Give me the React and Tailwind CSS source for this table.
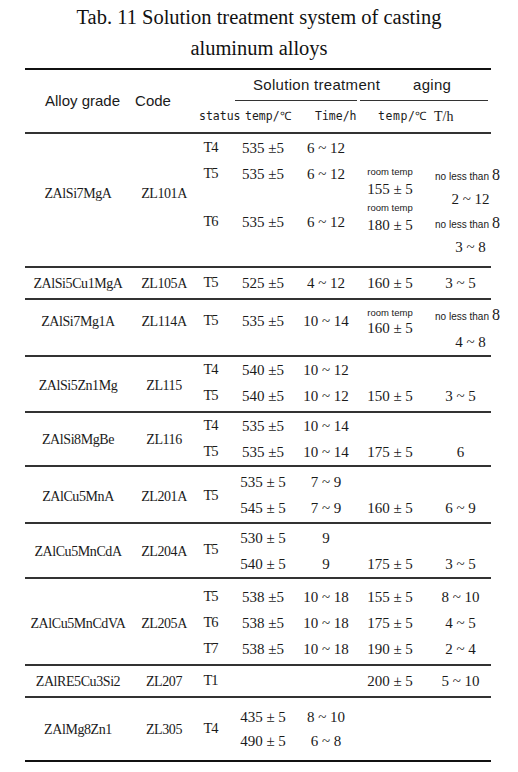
import React from "react";

const serif = "font-['Liberation_Serif','Times_New_Roman',serif]";
const sans = "font-['Liberation_Sans',Arial,sans-serif]";
const mono = "font-['DejaVu_Sans_Mono',monospace]";

function RoomTemp() {
  return <span className={`${sans} text-[9.5px] leading-none`}>room temp</span>;
}

function NoLess() {
  return (
    <span className="flex items-baseline gap-[3px]">
      <span className={`${sans} text-[10px] leading-none`}>no less than</span>
      <span className="text-[16px] leading-none">8</span>
    </span>
  );
}

// one column of a group: pt is the padding above, h the height of each line
function Col({ w, pt = "", h = "h-[26px]", items, cls = "" }) {
  return (
    <div className={`flex shrink-0 flex-col ${w} ${pt}`}>
      {items.map((it, i) => {
        const o =
          it && typeof it === "object" && !React.isValidElement(it) ? it : { t: it };
        return (
          <div
            key={i}
            className={`flex shrink-0 items-center justify-center whitespace-nowrap ${o.h || h} ${o.c || ""} ${cls}`}
          >
            {o.t}
          </div>
        );
      })}
    </div>
  );
}

function Group({ h, last, name, code, status, temp, time, aging, th }) {
  return (
    <div
      className={`flex ${h} ${
        last ? "border-b-2 border-[#111]" : "border-b-2 border-[#333]"
      }`}
    >
      <Col w="w-[106px]" items={[name]} cls="text-[14px] tracking-[-0.03em]" />
      <Col w="w-[66px]" items={[code]} cls="text-[14px] tracking-[-0.03em]" />
      <Col w="w-[27px]" {...status} cls="text-[14.5px] tracking-[-0.08em]" />
      <Col w="w-[78px]" {...temp} />
      <Col w="w-[48px]" {...time} />
      <Col w="w-[80px]" {...aging} />
      <Col w="w-[61px]" {...th} />
    </div>
  );
}

export default function App() {
  return (
    <div className={`h-[772px] w-[518px] overflow-hidden bg-white text-[#1a1a1a] ${serif}`}>
      <div className="pt-[2px] text-center text-[20.5px] leading-[31px] text-[#111]">
        <div>Tab. 11 Solution treatment system of casting</div>
        <div>aluminum alloys</div>
      </div>

      <div className="ml-[25px] mt-[4px] w-[466px] text-[15px]">
        {/* header */}
        <div className="flex h-[66px] border-y-2 border-t-[#111] border-b-[#333]">
          <div className={`flex w-[174px] items-center ${sans} text-[15px]`}>
            <span className="ml-[20px]">Alloy grade</span>
            <span className="ml-[15px]">Code</span>
          </div>
          <div className="flex flex-col">
            <div className={`flex h-[31px] ${sans} text-[15px] tracking-[0.02em]`}>
              <div className="ml-[36px] flex w-[122px] items-end border-b border-[#333] pb-[4px] pl-[18px] whitespace-nowrap">
                Solution treatment
              </div>
              <div className="ml-[3px] flex w-[128px] items-end border-b border-[#333] pb-[4px] pl-[53px]">
                aging
              </div>
            </div>
            <div className={`flex h-[31px] items-center ${mono} text-[11.5px]`}>
              <span className="w-[46px]">status</span>
              <span className="w-[70px]">temp/℃</span>
              <span className="w-[63px]">Time/h</span>
              <span className="w-[56px] tracking-[0.05em]">temp/℃</span>
              <span className={`${serif} text-[14px]`}>T/h</span>
            </div>
          </div>
        </div>

        <Group
          h="h-[134px]"
          name={{ t: "ZAlSi7MgA", h: "h-[118px]" }}
          code={{ t: "ZL101A", h: "h-[118px]" }}
          status={{ items: [{ t: "T4", h: "h-[28px]" }, { t: "T5", h: "h-[24px]" }, { t: "", h: "h-[24px]" }, { t: "T6", h: "h-[24px]" }] }}
          temp={{ items: [{ t: "535 ±5", h: "h-[28px]" }, { t: "535 ±5", h: "h-[24px]" }, { t: "", h: "h-[24px]" }, { t: "535 ±5", h: "h-[24px]" }] }}
          time={{ items: [{ t: "6 ~ 12", h: "h-[28px]" }, { t: "6 ~ 12", h: "h-[24px]" }, { t: "", h: "h-[24px]" }, { t: "6 ~ 12", h: "h-[24px]" }] }}
          aging={{
            items: [
              { t: "", h: "h-[32px]" },
              { t: <RoomTemp />, h: "h-[12px]" },
              { t: "155 ± 5", h: "h-[22px]" },
              { t: <RoomTemp />, h: "h-[16px]" },
              { t: "180 ± 5", h: "h-[18px]" },
            ],
          }}
          th={{
            items: [
              { t: "", h: "h-[29px]" },
              { t: <NoLess />, h: "h-[24px]", c: "pl-[14px]" },
              { t: "2 ~ 12", h: "h-[24px]", c: "pl-[20px]" },
              { t: <NoLess />, h: "h-[24px]", c: "pl-[14px]" },
              { t: "3 ~ 8", h: "h-[24px]", c: "pl-[20px]" },
            ],
          }}
        />

        <Group
          h="h-[32px]"
          name={{ t: "ZAlSi5Cu1MgA", h: "h-[30px]" }}
          code={{ t: "ZL105A", h: "h-[30px]" }}
          status={{ h: "h-[30px]", items: ["T5"] }}
          temp={{ h: "h-[30px]", items: ["525 ±5"] }}
          time={{ h: "h-[30px]", items: ["4 ~ 12"] }}
          aging={{ h: "h-[30px]", items: ["160 ± 5"] }}
          th={{ h: "h-[30px]", items: ["3 ~ 5"] }}
        />

        <Group
          h="h-[57px]"
          name={{ t: "ZAlSi7Mg1A", h: "h-[42px]" }}
          code={{ t: "ZL114A", h: "h-[42px]" }}
          status={{ h: "h-[42px]", items: ["T5"] }}
          temp={{ h: "h-[42px]", items: ["535 ±5"] }}
          time={{ h: "h-[42px]", items: ["10 ~ 14"] }}
          aging={{
            items: [
              { t: "", h: "h-[6px]" },
              { t: <RoomTemp />, h: "h-[14px]" },
              { t: "160 ± 5", h: "h-[16px]" },
            ],
          }}
          th={{
            items: [
              { t: <NoLess />, h: "h-[30px]", c: "pl-[14px]" },
              { t: "4 ~ 8", h: "h-[24px]", c: "pl-[20px]" },
            ],
          }}
        />

        <Group
          h="h-[56px]"
          name={{ t: "ZAlSi5Zn1Mg", h: "h-[56px]" }}
          code={{ t: "ZL115", h: "h-[56px]" }}
          status={{ items: ["T4", "T5"] }}
          temp={{ items: ["540 ±5", "540 ±5"] }}
          time={{ items: ["10 ~ 12", "10 ~ 12"] }}
          aging={{ items: ["", "150 ± 5"] }}
          th={{ items: ["", "3 ~ 5"] }}
        />

        <Group
          h="h-[54px]"
          name={{ t: "ZAlSi8MgBe", h: "h-[52px]" }}
          code={{ t: "ZL116", h: "h-[52px]" }}
          status={{ items: ["T4", "T5"] }}
          temp={{ items: ["535 ±5", "535 ±5"] }}
          time={{ items: ["10 ~ 14", "10 ~ 14"] }}
          aging={{ items: ["", "175 ± 5"] }}
          th={{ items: ["", "6"] }}
        />

        <Group
          h="h-[57px]"
          name={{ t: "ZAlCu5MnA", h: "h-[58px]" }}
          code={{ t: "ZL201A", h: "h-[58px]" }}
          status={{ h: "h-[58px]", items: ["T5"] }}
          temp={{ pt: "pt-[2px]", items: ["535 ± 5", "545 ± 5"] }}
          time={{ pt: "pt-[2px]", items: ["7 ~ 9", "7 ~ 9"] }}
          aging={{ pt: "pt-[2px]", items: ["", "160 ± 5"] }}
          th={{ pt: "pt-[2px]", items: ["", "6 ~ 9"] }}
        />

        <Group
          h="h-[55px]"
          name={{ t: "ZAlCu5MnCdA", h: "h-[54px]" }}
          code={{ t: "ZL204A", h: "h-[54px]" }}
          status={{ h: "h-[52px]", items: ["T5"] }}
          temp={{ pt: "pt-[1px]", items: ["530 ± 5", "540 ± 5"] }}
          time={{ pt: "pt-[1px]", items: ["9", "9"] }}
          aging={{ pt: "pt-[1px]", items: ["", "175 ± 5"] }}
          th={{ pt: "pt-[1px]", items: ["", "3 ~ 5"] }}
        />

        <Group
          h="h-[87px]"
          name={{ t: "ZAlCu5MnCdVA", h: "h-[88px]" }}
          code={{ t: "ZL205A", h: "h-[88px]" }}
          status={{ pt: "pt-[5px]", items: ["T5", "T6", "T7"] }}
          temp={{ pt: "pt-[5px]", items: ["538 ±5", "538 ±5", "538 ±5"] }}
          time={{ pt: "pt-[5px]", items: ["10 ~ 18", "10 ~ 18", "10 ~ 18"] }}
          aging={{ pt: "pt-[5px]", items: ["155 ± 5", "175 ± 5", "190 ± 5"] }}
          th={{ pt: "pt-[5px]", items: ["8 ~ 10", "4 ~ 5", "2 ~ 4"] }}
        />

        <Group
          h="h-[32px]"
          name={{ t: "ZAlRE5Cu3Si2", h: "h-[30px]" }}
          code={{ t: "ZL207", h: "h-[30px]" }}
          status={{ h: "h-[30px]", items: ["T1"] }}
          temp={{ h: "h-[30px]", items: [""] }}
          time={{ h: "h-[30px]", items: [""] }}
          aging={{ h: "h-[30px]", items: ["200 ± 5"] }}
          th={{ h: "h-[30px]", items: ["5 ~ 10"] }}
        />

        <Group
          h="h-[64px]"
          last
          name={{ t: "ZAlMg8Zn1", h: "h-[62px]" }}
          code={{ t: "ZL305", h: "h-[62px]" }}
          status={{ h: "h-[62px]", items: ["T4"] }}
          temp={{ pt: "pt-[7px]", h: "h-[24px]", items: ["435 ± 5", "490 ± 5"] }}
          time={{ pt: "pt-[7px]", h: "h-[24px]", items: ["8 ~ 10", "6 ~ 8"] }}
          aging={{ items: [""] }}
          th={{ items: [""] }}
        />
      </div>
    </div>
  );
}
